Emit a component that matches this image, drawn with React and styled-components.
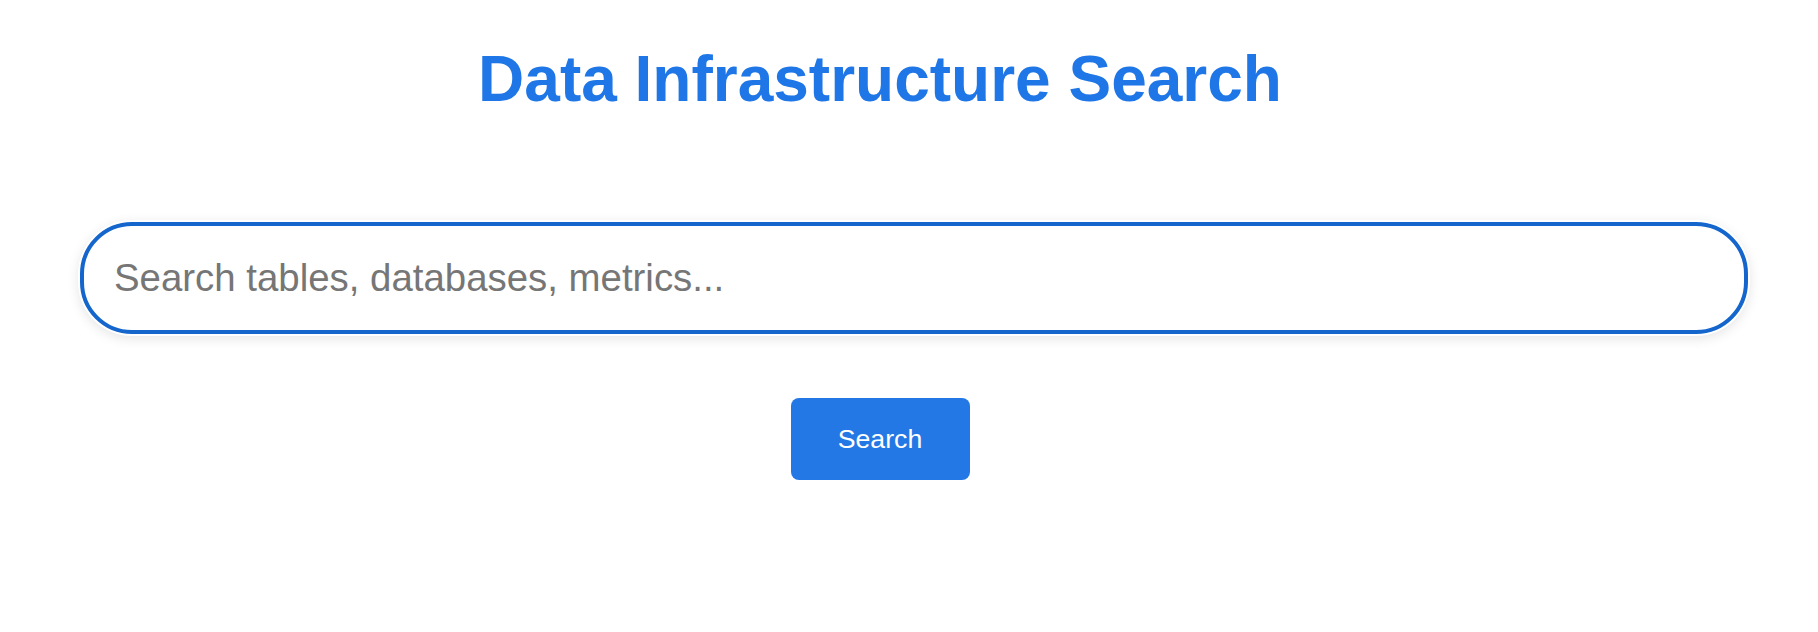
import React, {useState} from 'react'
import styled, {createGlobalStyle} from 'styled-components'

const GlobalStyle = createGlobalStyle`
  html, body {
    margin: 0;
    padding: 0;
    background: #ffffff;
  }
  body {
    font-family: "Liberation Sans", Arial, Helvetica, sans-serif;
  }
`

const Page = styled.div`
  width: 1600px;
  margin-left: 80px;
  padding-top: 42px;
  display: flex;
  flex-direction: column;
  align-items: center;
`

const Title = styled.h1`
  margin: 0;
  font-size: 64px;
  line-height: 74px;
  font-weight: 700;
  color: #1f76e6;
  text-align: center;
`

const SearchForm = styled.form`
  margin-top: 106px;
  width: 100%;
  display: flex;
  flex-direction: column;
  align-items: center;
  gap: 64px;
`

const SearchInput = styled.input`
  box-sizing: content-box;
  align-self: flex-start;
  width: 100%;
  height: 44px;
  padding: 30px;
  border: 4px solid #1466cc;
  border-radius: 52px;
  font-family: "Liberation Sans", Arial, Helvetica, sans-serif;
  font-size: 38.4px;
  color: #222;
  background: #fff;
  outline: none;
  box-shadow: 0 0 0 2px #ffffff, 0 3px 12px 2px rgba(0, 0, 0, 0.1);

  &::placeholder {
    color: #767676;
  }
`

const SearchButton = styled.button`
  width: 179px;
  height: 82px;
  padding: 0;
  border: none;
  border-radius: 8px;
  background: #2378e6;
  color: #ffffff;
  font-family: "Liberation Sans", Arial, Helvetica, sans-serif;
  font-size: 26.67px;
  cursor: pointer;
`

const App = () => {
  const [query, setQuery] = useState('')

  return (
    <>
      <GlobalStyle />
      <Page>
        <Title>Data Infrastructure Search</Title>
        <SearchForm onSubmit={(event) => event.preventDefault()}>
          <SearchInput
            type='text'
            placeholder='Search tables, databases, metrics...'
            value={query}
            onChange={(event) => setQuery(event.target.value)}
          />
          <SearchButton type='submit'>Search</SearchButton>
        </SearchForm>
      </Page>
    </>
  )
}

export default App
